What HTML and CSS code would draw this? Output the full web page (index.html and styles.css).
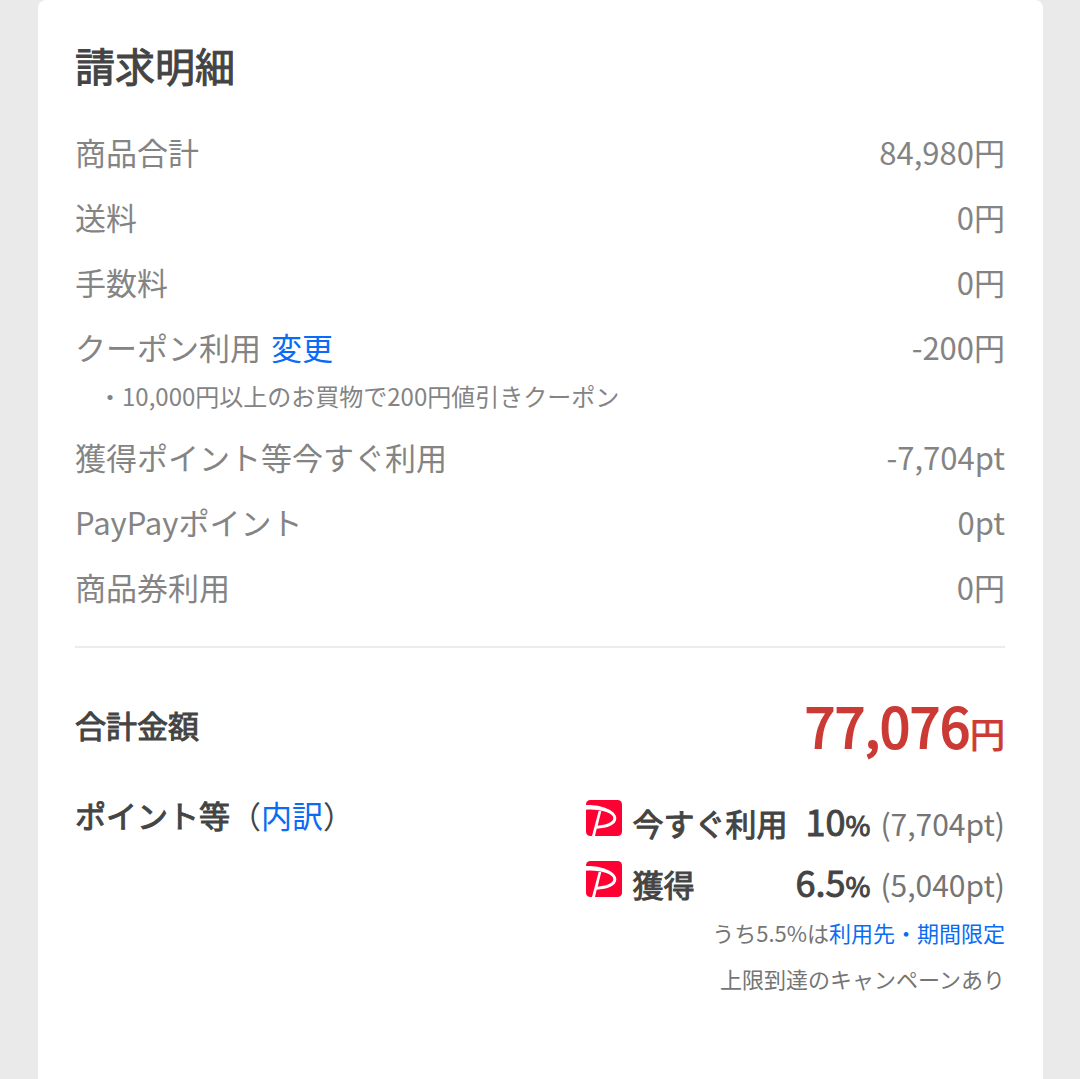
FILE: index.html
```html
<!DOCTYPE html>
<html lang="ja">
<head>
<meta charset="utf-8">
<meta name="viewport" content="width=device-width, initial-scale=1">
<title>請求明細</title>
<link rel="stylesheet" href="styles.css">
</head>
<body>
<svg class="symbols" aria-hidden="true">
  <symbol id="paypay" viewBox="0 0 108 108">
    <rect width="108" height="108" rx="13" fill="#ff0033"/>
    <path fill="#fff" d="M0 15C34 13 91 27 91 55C91 75 64 85 32 86L27 108H18L38 33H46L35 77C59 75 82 68 82 54C82 39 42 26 0 29Z"/>
  </symbol>
</svg>
<main class="card">
  <h1 class="title">請求明細</h1>
  <dl class="rows">
    <div class="row"><dt>商品合計</dt><dd>84,980円</dd></div>
    <div class="row"><dt>送料</dt><dd>0円</dd></div>
    <div class="row"><dt>手数料</dt><dd>0円</dd></div>
    <div class="row row-coupon"><dt>クーポン利用<a class="change" href="#coupon">変更</a></dt><dd>-200円</dd><dd class="coupon">・10,000円以上のお買物で200円値引きクーポン</dd></div>
    <div class="row"><dt>獲得ポイント等今すぐ利用</dt><dd>-7,704pt</dd></div>
    <div class="row"><dt>PayPayポイント</dt><dd>0pt</dd></div>
    <div class="row"><dt>商品券利用</dt><dd>0円</dd></div>
  </dl>
  <section class="total">
    <h2 class="label">合計金額</h2>
    <p class="price">77,076<span class="yen">円</span></p>
  </section>
  <section class="points">
    <h2 class="label">ポイント等<span class="paren">（<a href="#breakdown">内訳</a>）</span></h2>
    <div class="detail">
      <div class="point"><svg class="logo" role="img" aria-label="PayPay"><use href="#paypay"/></svg><span class="kind">今すぐ利用</span><span class="rate">10<span class="percent">%</span></span><span class="amount">(7,704pt)</span></div>
      <div class="point"><svg class="logo" role="img" aria-label="PayPay"><use href="#paypay"/></svg><span class="kind">獲得</span><span class="rate">6.5<span class="percent">%</span></span><span class="amount">(5,040pt)</span></div>
      <p class="note">うち5.5%は<a href="#limited">利用先・期間限定</a></p>
      <p class="note">上限到達のキャンペーンあり</p>
    </div>
  </section>
</main>
</body>
</html>
```
FILE: styles.css
```css
* {
  box-sizing: border-box;
  margin: 0;
  padding: 0;
}

body {
  display: flex;
  min-height: 100vh;
  padding: 0 37px 0 38px;
  background: #eaeaea;
  color: #444;
  font-family: "Noto Sans CJK JP", sans-serif;
  font-size: 31px;
  line-height: 40px;
}

a {
  color: #0a6cf5;
  text-decoration: none;
}

.symbols {
  display: none;
}

.card {
  flex: 1;
  padding: 35px 38px 0 37px;
  border-radius: 8px 8px 0 0;
  background: #fff;
}

/* Strong text is the regular weight thickened by an outline. */
.title,
.label,
.kind,
.rate {
  font-weight: 400;
  -webkit-text-stroke: 1px;
}

.title {
  font-size: 40px;
  line-height: 60px;
}

.rows {
  display: grid;
  gap: 25px;
  margin-top: 37px;
  padding-bottom: 39px;
  border-bottom: 2px solid #ececec;
  color: #848484;
}

.row {
  display: flex;
  flex-wrap: wrap;
  justify-content: space-between;
}

.change {
  margin-left: 10px;
}

.row-coupon {
  row-gap: 13px;
}

.coupon {
  width: 100%;
  padding-left: 23px;
  font-size: 24px;
  line-height: 32px;
}

.label {
  font-size: 31px;
}

.total {
  display: flex;
  align-items: center;
  justify-content: space-between;
  margin-top: 37px;
}

.price {
  color: #cb3a35;
  font-size: 54px;
  line-height: 80px;
  -webkit-text-stroke: 2px;
}

.yen {
  font-size: 35px;
  line-height: 1;
  -webkit-text-stroke: 1px;
}

.points {
  display: flex;
  justify-content: space-between;
  margin-top: 30px;
}

.paren {
  -webkit-text-stroke: 0;
}

.detail {
  display: grid;
  justify-items: end;
  padding-top: 5px;
}

.point {
  display: grid;
  grid-template-columns: 36px 154px 74px auto;
  column-gap: 10px;
  align-items: baseline;
  height: 48px;
}

.point + .point {
  margin-top: 13px;
}

.logo {
  width: 36px;
  height: 36px;
}

.kind {
  white-space: nowrap;
}

.rate {
  display: flex;
  align-items: baseline;
  justify-content: flex-end;
  font-size: 36px;
}

.percent {
  font-size: 27px;
}

.amount {
  color: #757575;
  font-size: 30px;
}

.note {
  color: #757575;
  font-size: 22px;
  line-height: 46px;
}
```
